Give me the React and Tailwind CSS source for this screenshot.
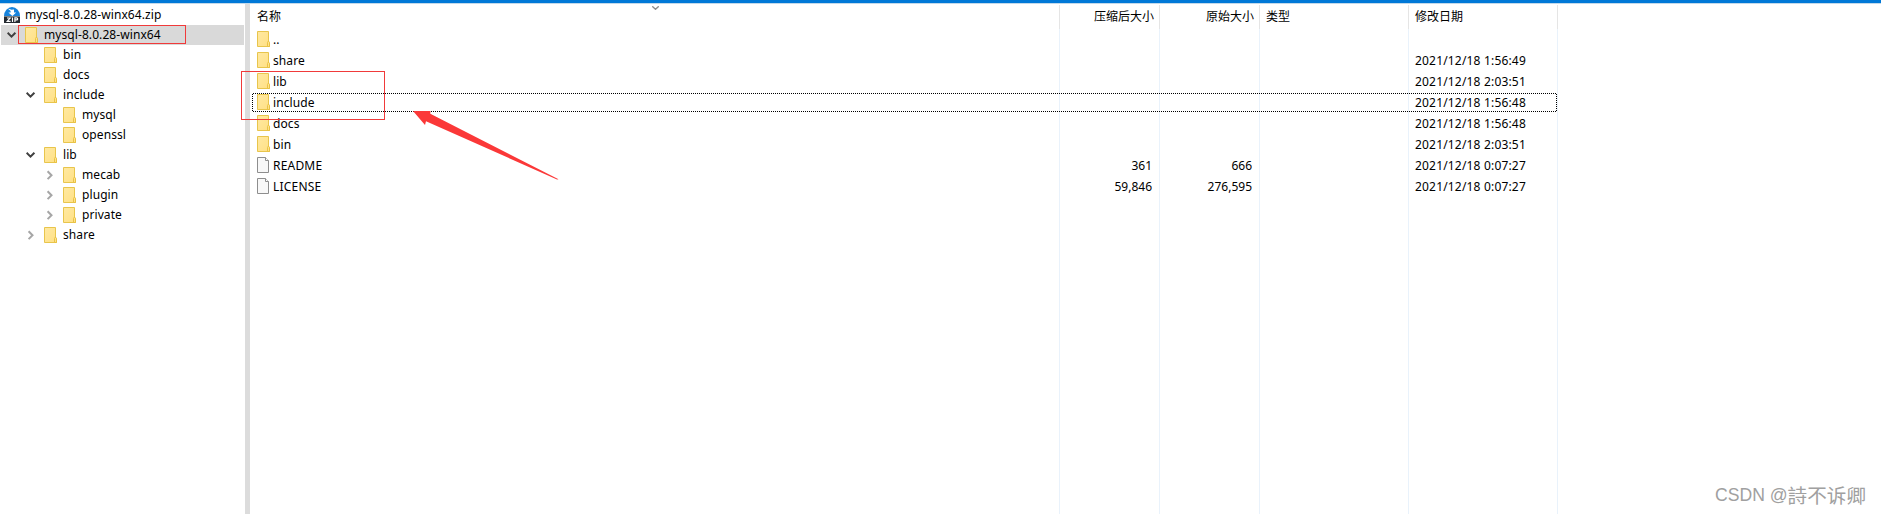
import React from "react";

const UI = "font-['Noto_Sans','Noto_Sans_CJK_SC',sans-serif] text-[12px] text-black";

function Folder() {
  return (
    <svg className="h-4 w-[13px] shrink-0" viewBox="0 0 13 16">
      <defs>
        <linearGradient id="fold" x1="0" y1="0" x2="1" y2="1">
          <stop offset="0" stopColor="#ffe9a2" />
          <stop offset="1" stopColor="#ffe084" />
        </linearGradient>
      </defs>
      <path d="M.5.5h11v10.2l1 1v3.8H.5z" fill="url(#fold)" stroke="#e8c54c" />
      <path d="M10.5 15.5v-4l1-1.5 1 1.5v4z" fill="#ffe28a" stroke="#e8c040" strokeWidth=".9" />
    </svg>
  );
}

function Page() {
  return (
    <svg className="h-4 w-[13px] shrink-0" viewBox="0 0 13 16">
      <path d="M.5.5h8l3 3v12H.5z" fill="#f8f8f8" stroke="#8e8e8e" />
      <path d="M8.5.5v3h3" fill="#fff" stroke="#8e8e8e" />
    </svg>
  );
}

function Zip() {
  return (
    <svg className="h-4 w-4 shrink-0" viewBox="0 0 16 16">
      <path d="M0 9a8 9 0 0 1 16 0z" fill="#1683dc" />
      <path d="M3.8 1.5 7.6 2.8 10 2.6v3h2.2L8.4 9 4.4 5.6h2.2V4z" fill="#fff" />
      <rect y="9.4" width="16" height="6.6" fill="#242a31" />
      <path
        d="M3 11h3.2L3.2 14.4h3.4M8.5 10.5v4.4M10.9 14.9v-4h1.7q1.1 0 1.1 1t-1.1 1h-1.7"
        fill="none"
        stroke="#fff"
        strokeWidth="1.15"
      />
    </svg>
  );
}

function Chevron({ open }) {
  return (
    <svg className="h-[10px] w-[10px] shrink-0" viewBox="0 0 10 10" fill="none">
      {open ? (
        <path d="M.6 2.8l3.9 3.9 3.9-3.9" stroke="#404040" strokeWidth="2" />
      ) : (
        <path d="M2.6 1.3l3.9 3.9-3.9 3.9" stroke="#a6a6a6" strokeWidth="2" />
      )}
    </svg>
  );
}

const tree = [
  { name: "mysql-8.0.28-winx64", pad: "pl-[6px]", state: "open", selected: true },
  { name: "bin", pad: "pl-[25px]" },
  { name: "docs", pad: "pl-[25px]" },
  { name: "include", pad: "pl-[25px]", state: "open" },
  { name: "mysql", pad: "pl-[44px]" },
  { name: "openssl", pad: "pl-[44px]" },
  { name: "lib", pad: "pl-[25px]", state: "open" },
  { name: "mecab", pad: "pl-[44px]", state: "closed" },
  { name: "plugin", pad: "pl-[44px]", state: "closed" },
  { name: "private", pad: "pl-[44px]", state: "closed" },
  { name: "share", pad: "pl-[25px]", state: "closed" },
];

const files = [
  { name: "..", date: "" },
  { name: "share", date: "2021/12/18 1:56:49" },
  { name: "lib", date: "2021/12/18 2:03:51" },
  { name: "include", date: "2021/12/18 1:56:48" },
  { name: "docs", date: "2021/12/18 1:56:48" },
  { name: "bin", date: "2021/12/18 2:03:51" },
  { name: "README", packed: "361", size: "666", date: "2021/12/18 0:07:27", file: true },
  { name: "LICENSE", packed: "59,846", size: "276,595", date: "2021/12/18 0:07:27", file: true },
];

function Column({ title, width, head, children }) {
  return (
    <div className={`flex shrink-0 flex-col ${width}`}>
      <div className={`flex h-6 shrink-0 items-center border-r border-[#e5e5e5] ${head}`}>
        <span className="leading-none">{title}</span>
      </div>
      <div className="flex grow flex-col border-r border-[#e9f2fb]">{children}</div>
    </div>
  );
}

export default function App() {
  return (
    <div className={`relative flex h-[514px] w-[1881px] flex-col overflow-hidden bg-white ${UI}`}>
      <div className="h-1 shrink-0 border-b border-[#c3d9ea] bg-[#0078d7]" />
      <div className="flex grow">
        <div className="flex w-[245px] shrink-0 flex-col pt-px">
          <div className="flex h-5 items-center pl-1">
            <Zip />
            <span className="pl-[5px] leading-5 tracking-[0.08px]">mysql-8.0.28-winx64.zip</span>
          </div>
          {tree.map((n) => (
            <div
              key={n.name}
              className={`ml-px mr-px flex h-5 items-center ${n.pad} ${n.selected ? "bg-[#d9d9d9]" : ""}`}
            >
              <span className="flex w-[18px] shrink-0">{n.state && <Chevron open={n.state === "open"} />}</span>
              <Folder />
              <span className="pl-[6px] leading-5 tracking-[0.08px]">{n.name}</span>
            </div>
          ))}
        </div>
        <div className="w-[5px] shrink-0 bg-[#dcdcdc]" />
        <div className="flex grow pt-px">
          <Column title="名称" width="w-[810px]" head="pl-[7px]">
            {files.map((f) => (
              <div key={f.name} className="flex h-[21px] items-center pl-[7px]">
                <span className="flex h-[21px] items-start pt-[2px]">{f.file ? <Page /> : <Folder />}</span>
                <span className={`pl-[3px] leading-5 ${f.file ? "tracking-[0.2px]" : "tracking-[0.08px]"}`}>{f.name}</span>
              </div>
            ))}
          </Column>
          <Column title="压缩后大小" width="w-[100px]" head="justify-end pr-[5px]">
            {files.map((f) => (
              <div key={f.name} className="h-[21px] pr-[7px] text-right leading-[21px]">{f.packed}</div>
            ))}
          </Column>
          <Column title="原始大小" width="w-[100px]" head="justify-end pr-[5px]">
            {files.map((f) => (
              <div key={f.name} className="h-[21px] pr-[7px] text-right leading-[21px]">{f.size}</div>
            ))}
          </Column>
          <Column title="类型" width="w-[149px]" head="pl-[6px]" />
          <Column title="修改日期" width="w-[149px]" head="pl-[6px]">
            {files.map((f) => (
              <div key={f.name} className="h-[21px] pl-[6px] leading-[21px] tracking-[0.18px]">{f.date}</div>
            ))}
          </Column>
        </div>
      </div>

      <svg className="absolute left-[652px] top-[6px] h-[4px] w-[7px]" viewBox="0 0 7 4">
        <path d="M.3.3 3.5 3.3 6.7.3" fill="none" stroke="#8c8c8c" strokeWidth="1.3" />
      </svg>

      <div className="absolute left-[252px] top-[93px] h-[19px] w-[1305px]">
        <div className="absolute inset-x-0 top-0 h-px bg-[repeating-linear-gradient(90deg,transparent_0_1px,#000_1px_2px)]" />
        <div className="absolute inset-x-0 bottom-0 h-px bg-[repeating-linear-gradient(90deg,transparent_0_1px,#000_1px_2px)]" />
        <div className="absolute inset-y-0 left-0 w-px bg-[repeating-linear-gradient(180deg,transparent_0_1px,#000_1px_2px)]" />
        <div className="absolute inset-y-0 right-0 w-px bg-[repeating-linear-gradient(180deg,transparent_0_1px,#000_1px_2px)]" />
      </div>

      <div className="absolute left-[18px] top-[25px] h-[19px] w-[168px] border border-[#f03a3a]" />
      <div className="absolute left-[241px] top-[71px] h-[49px] w-[144px] border border-[#f03a3a]" />
      <svg className="absolute left-[413px] top-[111px] h-[70px] w-[146px]" viewBox="0 0 146 70">
        <path d="M0 0H17.5L17.3 2.7 145.5 68.2 144 68.4 13 10.2 12 14z" fill="#fb3838" />
      </svg>

      <div className="absolute left-[1715px] top-[483px] flex h-6 items-center whitespace-nowrap text-[#a0a0a0]">
        <span className="font-['Liberation_Sans',sans-serif] text-[17.6px] leading-6">CSDN @</span>
        <span className="font-['Noto_Sans_CJK_SC',sans-serif] text-[19.6px] leading-6">詩不诉卿</span>
      </div>
    </div>
  );
}
